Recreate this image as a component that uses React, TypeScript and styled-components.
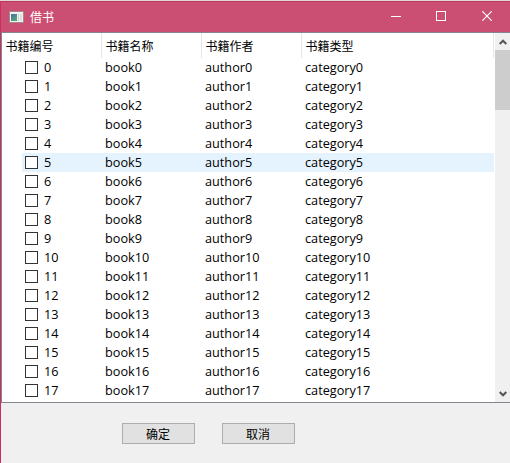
import React from 'react';
import styled, { createGlobalStyle } from 'styled-components';

const GlobalStyle = createGlobalStyle`
  * { box-sizing: border-box; }
  body { margin: 0; overflow: hidden; }
`;

const Window = styled.div`
  display: flex;
  flex-direction: column;
  width: 510px;
  height: 463px;
  border-top: 1px solid #dcd9d8;
  background: #f0f0f0;
  color: #000;
  font: 12.7px/19px 'Open Sans', 'Noto Sans CJK SC', sans-serif;
`;

const Frame = styled.div`
  display: flex;
  flex-direction: column;
  flex: 1;
  border-left: 1px solid #cb2e62;
  border-top: 1px solid #c3355f;
`;

const TitleBar = styled.header`
  display: flex;
  align-items: center;
  height: 30px;
  padding-left: 8px;
  background: #cb4f72;
  color: #fff;
`;

const Title = styled.span`
  flex: 1;
  margin-left: 6px;
  padding-bottom: 2px;
  font-size: 12px;
  font-family: 'Noto Sans CJK SC', sans-serif;
`;

const WindowButton = styled.button`
  display: flex;
  align-items: center;
  justify-content: center;
  width: 46px;
  height: 30px;
  padding: 0 0 2px;
  border: 0;
  background: none;
`;

const ListPane = styled.main`
  display: flex;
  height: 371px;
  border: solid #828790;
  border-width: 1px 0 1px 1px;
  background: #fff;
`;

const Table = styled.div`
  flex: 1;
`;

const HeaderRow = styled.div`
  display: grid;
  grid-template-columns: 100px 100px 100px 192px;
  height: 25px;
  font: 12px/25px 'Noto Sans CJK SC', sans-serif;
`;

const HeaderCell = styled.div`
  padding-left: 3.5px;
  border-right: 1px solid #e5e5e5;
`;

const Row = styled.div<{ $hot: boolean }>`
  display: grid;
  grid-template-columns: 80px 100px 100px 1fr;
  height: 19px;
  margin-left: 20px;
  margin-right: 1px;
  padding-left: 3px;
  background: ${(p) => (p.$hot ? '#e5f3ff' : 'transparent')};
`;

const Cell = styled.div`
  display: flex;
  align-items: center;
  gap: 6px;
  white-space: nowrap;
`;

const CheckBox = styled.span`
  width: 13px;
  height: 13px;
  border: 1px solid #333;
  background: #fff;
`;

const ScrollBar = styled.div`
  display: flex;
  flex-direction: column;
  width: 15px;
  background: #f0f0f0;
`;

const ScrollArrow = styled.div`
  display: flex;
  align-items: center;
  justify-content: center;
  height: 17px;
`;

const Track = styled.div`
  flex: 1;
`;

const Thumb = styled.div`
  height: 60px;
  background: #cdcdcd;
`;

const Actions = styled.footer`
  display: flex;
  gap: 27px;
  padding: 20px 0 0 121px;
`;

const ActionButton = styled.button`
  width: 73px;
  height: 21px;
  padding: 0 1px 0 0;
  border: 1px solid #adadad;
  background: #e1e1e1;
  color: #000;
  font: 12px/19px 'Noto Sans CJK SC', sans-serif;
`;

const AppIcon = () => (
  <svg width="15" height="13" viewBox="0 0 15 13" shapeRendering="crispEdges">
    <defs>
      <linearGradient id="pane" x1="0" y1="0" x2="0.6" y2="1">
        <stop offset="0" stopColor="#4671a8" />
        <stop offset="1" stopColor="#54a478" />
      </linearGradient>
    </defs>
    <rect width="15" height="12" fill="#a3878f" />
    <rect x="1" y="1" width="13" height="10" fill="#f2f2f0" />
    <rect x="2" y="3" width="6" height="7" fill="url(#pane)" />
    <rect x="9" y="3" width="1" height="7" fill="#c9cfcb" />
    <rect x="11" y="3" width="2" height="7" fill="#dedfdc" />
  </svg>
);

const columns = ['书籍编号', '书籍名称', '书籍作者', '书籍类型'];
const books = Array.from({ length: 18 }, (_, i) => i);
const hotRow = 5;

export default function App() {
  return (
    <>
      <GlobalStyle />
      <Window>
        <Frame>
          <TitleBar>
            <AppIcon />
            <Title>借书</Title>
            <WindowButton aria-label="minimize">
              <svg width="12" height="10" shapeRendering="crispEdges"><path d="M2 5.5h10" stroke="#fff" /></svg>
            </WindowButton>
            <WindowButton aria-label="maximize">
              <svg width="10" height="10" shapeRendering="crispEdges"><path d="M.5.5h9v9h-9z" fill="none" stroke="#fff" /></svg>
            </WindowButton>
            <WindowButton aria-label="close">
              <svg width="10" height="10"><path d="M.3.3l9.4 9.4M9.7.3L.3 9.7" stroke="#fff" strokeWidth="1.2" /></svg>
            </WindowButton>
          </TitleBar>
          <ListPane>
            <Table>
              <HeaderRow>
                {columns.map((c) => <HeaderCell key={c}>{c}</HeaderCell>)}
              </HeaderRow>
              {books.map((i) => (
                <Row key={i} $hot={i === hotRow}>
                  <Cell><CheckBox />{i}</Cell>
                  <Cell>book{i}</Cell>
                  <Cell>author{i}</Cell>
                  <Cell>category{i}</Cell>
                </Row>
              ))}
            </Table>
            <ScrollBar>
              <ScrollArrow>
                <svg width="8" height="6"><path d="M.7 5L4 1.7 7.3 5" fill="none" stroke="#555" strokeWidth="2" /></svg>
              </ScrollArrow>
              <Track><Thumb /></Track>
              <ScrollArrow>
                <svg width="8" height="6"><path d="M.7 1L4 4.3 7.3 1" fill="none" stroke="#555" strokeWidth="2" /></svg>
              </ScrollArrow>
            </ScrollBar>
          </ListPane>
          <Actions>
            <ActionButton>确定</ActionButton>
            <ActionButton>取消</ActionButton>
          </Actions>
        </Frame>
      </Window>
    </>
  );
}
